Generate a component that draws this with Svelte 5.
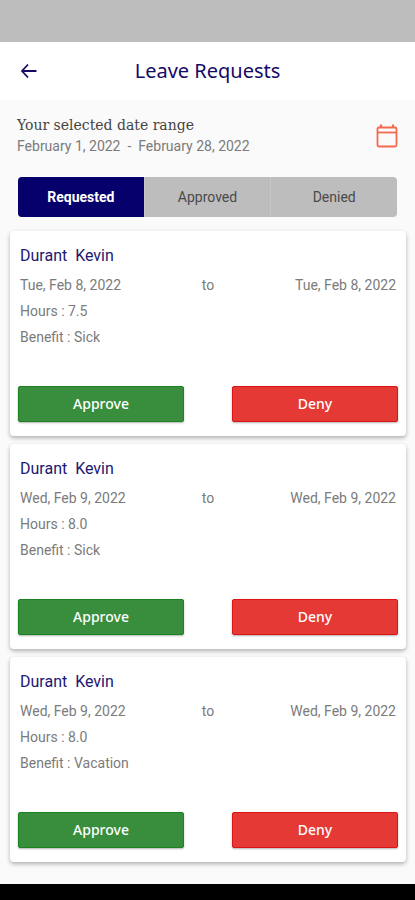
<script>
  let tabs = ["Requested", "Approved", "Denied"];
  let active = "Requested";

  let requests = [
    { name: "Durant  Kevin", from: "Tue, Feb 8, 2022", to: "Tue, Feb 8, 2022", hours: "7.5", benefit: "Sick" },
    { name: "Durant  Kevin", from: "Wed, Feb 9, 2022", to: "Wed, Feb 9, 2022", hours: "8.0", benefit: "Sick" },
    { name: "Durant  Kevin", from: "Wed, Feb 9, 2022", to: "Wed, Feb 9, 2022", hours: "8.0", benefit: "Vacation" },
  ];
</script>

<div class="screen">
  <div class="status"></div>

  <header>
    <button class="icon" aria-label="Back">
      <svg width="18" height="16" viewBox="0 0 18 16">
        <path d="M16.5 8H2.5M8 1.5L2 8l6 6.5" fill="none" stroke="#150a66" stroke-width="1.8" />
      </svg>
    </button>
    <h1>Leave Requests</h1>
  </header>

  <main>
    <section class="range">
      <div>
        <h2>Your selected date range</h2>
        <p>February 1, 2022&nbsp; -&nbsp; February 28, 2022</p>
      </div>
      <button class="icon" aria-label="Choose dates">
        <svg width="22" height="24" viewBox="0 0 22 24" fill="none" stroke="#f4694f">
          <rect x="1.5" y="3.5" width="19" height="19" rx="1.5" stroke-width="1.8" />
          <path d="M2 8.5h18" stroke-width="1.8" />
          <path d="M5 0.5v3M17 0.5v3" stroke-width="2.2" />
        </svg>
      </button>
    </section>

    <nav class="tabs">
      {#each tabs as tab}
        <button class:active={tab === active} on:click={() => (active = tab)}>{tab}</button>
      {/each}
    </nav>

    <div class="list">
      {#each requests as request}
        <article class="card">
          <h3>{request.name}</h3>
          <div class="dates">
            <span>{request.from}</span>
            <span>to</span>
            <span class="end">{request.to}</span>
          </div>
          <p>Hours : {request.hours}</p>
          <p>Benefit : {request.benefit}</p>
          <div class="actions">
            <button class="approve">Approve</button>
            <button class="deny">Deny</button>
          </div>
        </article>
      {/each}
    </div>
  </main>

  <div class="bottom"></div>
</div>

<style>
  :global(body) {
    margin: 0;
  }
  .screen {
    display: flex;
    flex-direction: column;
    min-height: 100vh;
    background: #fafafa;
    color: #7b7b7b;
    font-family: Roboto, sans-serif;
    font-size: 14px;
  }
  h1,
  h2,
  h3,
  p {
    margin: 0;
    font-weight: 400;
  }
  button {
    border: 0;
    padding: 0;
    font: inherit;
    cursor: pointer;
  }
  .icon {
    display: flex;
    background: none;
  }
  .status {
    height: 42px;
    background: #bdbdbd;
  }
  header {
    display: grid;
    grid-template-columns: 20px 1fr 20px;
    align-items: center;
    height: 58px;
    padding: 0 20px;
    box-sizing: border-box;
    background: #fff;
  }
  h1 {
    text-align: center;
    color: #150a66;
    font-family: "Noto Sans", sans-serif;
    font-size: 20px;
    line-height: 28px;
  }
  main {
    flex: 1;
  }
  .range {
    display: flex;
    align-items: center;
    justify-content: space-between;
    padding: 14px 17px 20px;
  }
  h2 {
    color: #444;
    font-family: "DejaVu Serif", serif;
    font-size: 14px;
    line-height: 22px;
  }
  .range p {
    line-height: 21px;
  }
  .tabs {
    display: flex;
    height: 40px;
    margin: 0 18px;
    border-radius: 4px;
    overflow: hidden;
    background: #bdbdbd;
  }
  .tabs button {
    flex: 1;
    background: none;
    color: #4a4a4a;
  }
  .tabs button + button {
    border-left: 1px solid #c6c6c6;
  }
  .tabs .active {
    background: #05006b;
    color: #fff;
    font-weight: 700;
  }
  .list {
    display: flex;
    flex-direction: column;
    gap: 8px;
    padding: 14px 9px 22px 10px;
  }
  .card {
    padding: 9px 8px 14px;
    border-radius: 4px;
    background: #fff;
    box-shadow: 0 2px 4px rgba(0, 0, 0, 0.3);
    line-height: 26px;
  }
  .card h3 {
    padding: 0 2px;
    color: #211670;
    font-size: 16px;
    line-height: 32px;
    white-space: pre;
  }
  .card p {
    padding: 0 2px;
  }
  .dates {
    display: grid;
    grid-template-columns: 1fr auto 1fr;
    padding: 0 2px;
  }
  .end {
    text-align: right;
  }
  .actions {
    display: grid;
    grid-template-columns: 1fr 1fr;
    gap: 48px;
    margin-top: 36px;
  }
  .actions button {
    height: 36px;
    border-radius: 2px;
    color: #fff;
    font-family: "Noto Sans", sans-serif;
    font-weight: 500;
    box-shadow: 0 1px 2px rgba(0, 0, 0, 0.3);
  }
  .actions .approve {
    border: 1px solid #1c8220;
    background: #388e3c;
  }
  .actions .deny {
    border: 1px solid #dc1414;
    background: #e53935;
  }
  .bottom {
    height: 16px;
    background: #000;
  }
</style>
